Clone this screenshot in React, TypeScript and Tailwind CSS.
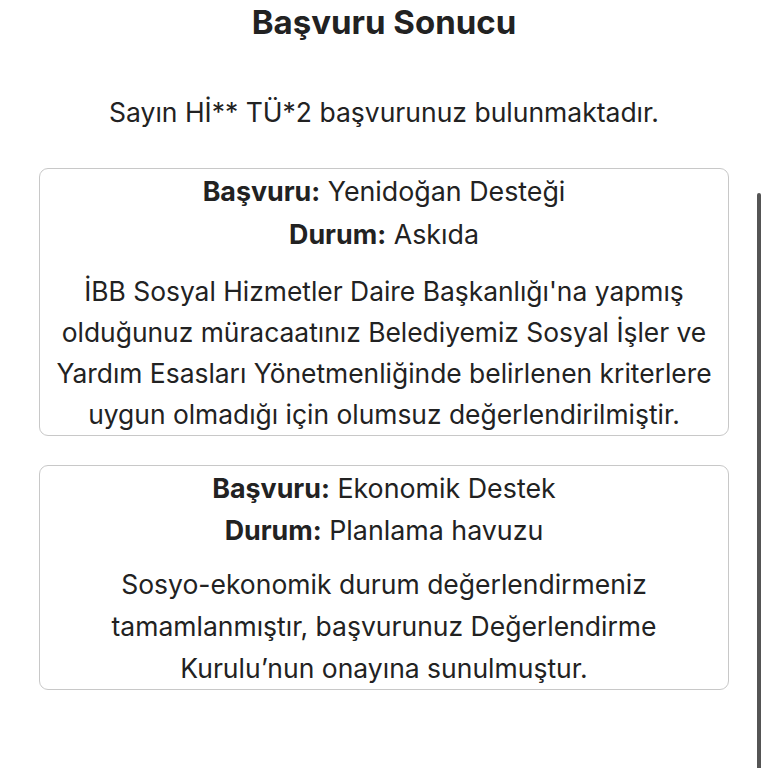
import React from "react";

const font = { fontFamily: "Inter, 'Noto Sans', 'Liberation Sans', sans-serif" };

export default function App() {
  return (
    <div className="relative w-[768px] h-[768px] overflow-hidden bg-white text-[#222]" style={font}>
      <h1 className="pt-[2px] text-center text-[33px] font-bold leading-[40px]">Başvuru Sonucu</h1>
      <p className="mt-[50px] text-center text-[26.5px] leading-[40px]">Sayın Hİ** TÜ*2 başvurunuz bulunmaktadır.</p>
      <div className="mt-[36px] flex flex-col gap-[29px]">
        <div className="mx-[39px] w-[690px] rounded-[9px] border border-[#c8c8c8] bg-white text-center text-[#222]">
          <div className="text-[26.8px] leading-[44px]">
            <span className="font-bold">Başvuru:</span> Yenidoğan Desteği
          </div>
          <div className="text-[26.8px] leading-[43px]">
            <span className="font-bold">Durum:</span> Askıda
          </div>
          <div className="mt-[15px] whitespace-nowrap text-[26.4px] leading-[41px]">
            <div>İBB Sosyal Hizmetler Daire Başkanlığı'na yapmış</div>
            <div>olduğunuz müracaatınız Belediyemiz Sosyal İşler ve</div>
            <div>Yardım Esasları Yönetmenliğinde belirlenen kriterlere</div>
            <div>uygun olmadığı için olumsuz değerlendirilmiştir.</div>
          </div>
        </div>
        <div className="mx-[39px] w-[690px] rounded-[9px] border border-[#c8c8c8] bg-white text-center text-[#222]">
          <div className="text-[26.8px] leading-[44px]">
            <span className="font-bold">Başvuru:</span> Ekonomik Destek
          </div>
          <div className="text-[26.8px] leading-[41px]">
            <span className="font-bold">Durum:</span> Planlama havuzu
          </div>
          <div className="mt-[12px] whitespace-nowrap text-[26.5px] leading-[42px]">
            <div>Sosyo-ekonomik durum değerlendirmeniz</div>
            <div>tamamlanmıştır, başvurunuz Değerlendirme</div>
            <div>Kurulu’nun onayına sunulmuştur.</div>
          </div>
        </div>
      </div>
      <div className="absolute left-[757px] top-[193px] h-[600px] w-[4px] rounded-full bg-[#555]" />
    </div>
  );
}
